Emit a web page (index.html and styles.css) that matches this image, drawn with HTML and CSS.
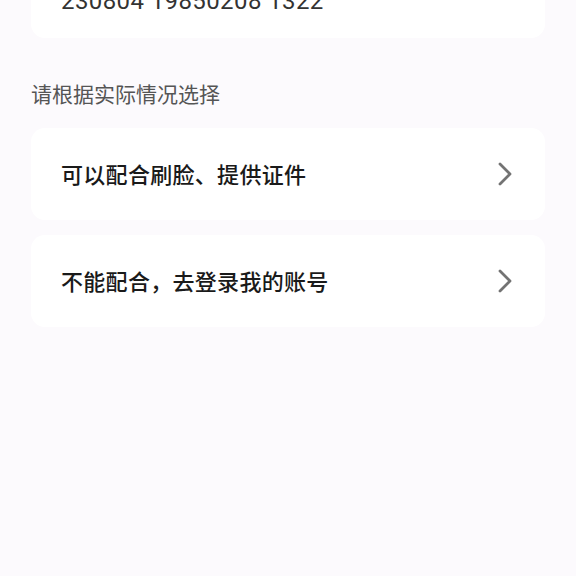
FILE: index.html
```html
<!DOCTYPE html>
<html lang="zh-CN">
<head>
    <meta charset="UTF-8">
    <meta name="viewport" content="width=device-width, initial-scale=1.0">
    <title>选择验证方式</title>
    <link rel="stylesheet" href="styles.css">
</head>
<body>
    <div class="page">
        <!-- ID card info (scrolled) -->
        <div class="card id-card">
            <p class="id-number">230804 19850208 1322</p>
        </div>

        <p class="hint">请根据实际情况选择</p>

        <div class="option-list">
            <div class="card option">
                <span>可以配合刷脸、提供证件</span>
                <svg class="chevron" viewBox="0 0 16 26" width="16" height="26">
                    <path d="M3 3 L13 13 L3 23" fill="none" stroke="#737373" stroke-width="2.8" stroke-linecap="round" stroke-linejoin="round"/>
                </svg>
            </div>
            <div class="card option">
                <span>不能配合，去登录我的账号</span>
                <svg class="chevron" viewBox="0 0 16 26" width="16" height="26">
                    <path d="M3 3 L13 13 L3 23" fill="none" stroke="#737373" stroke-width="2.8" stroke-linecap="round" stroke-linejoin="round"/>
                </svg>
            </div>
        </div>
    </div>
</body>
</html>
```

FILE: styles.css
```css
body {
    margin: 0;
    padding: 0;
    background-color: #fcfafd;
    font-family: Roboto, "Noto Sans CJK SC", sans-serif;
    color: #1a1a1a;
    height: 576px;
    overflow: hidden;
}

.page {
    padding: 0 31px;
    margin-top: -40px;
}

.card {
    background-color: #ffffff;
    border-radius: 14px;
}

.id-card {
    height: 78px;
    padding: 0 30px;
    display: flex;
    align-items: flex-end;
}

.id-number {
    margin: 0 0 23px;
    font-size: 24px;
    line-height: 28px;
    color: #333;
    letter-spacing: 0.4px;
}

.hint {
    margin: 45px 0 0;
    font-size: 21px;
    line-height: 24px;
    color: #555;
}

.option-list {
    margin-top: 21px;
    display: flex;
    flex-direction: column;
    gap: 15px;
}

.option {
    box-sizing: border-box;
    height: 92px;
    padding: 0 32px 2px 30px;
    display: flex;
    align-items: center;
    justify-content: space-between;
    font-size: 22px;
    font-weight: 500;
    letter-spacing: 0.3px;
    color: #1a1a1a;
}

.chevron {
    flex-shrink: 0;
    margin-top: 2px;
}
```
